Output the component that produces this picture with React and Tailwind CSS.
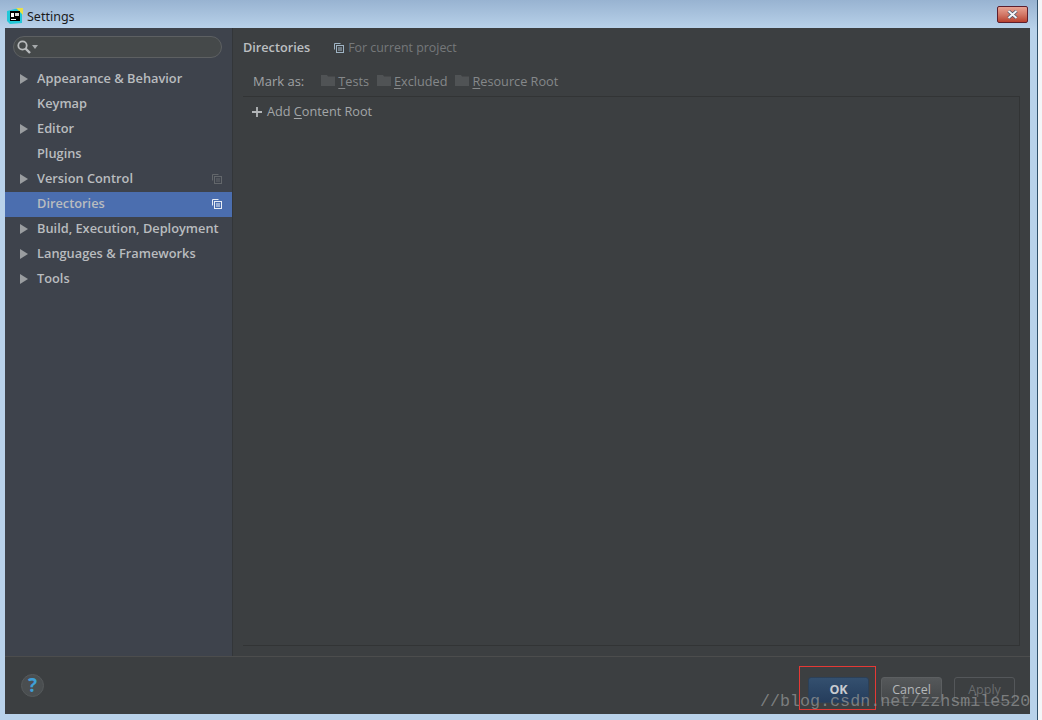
import React from "react";

const font = { fontFamily: '"Open Sans", "Noto Sans", sans-serif' };

const navItems = [
  { label: "Appearance & Behavior", arrow: true },
  { label: "Keymap" },
  { label: "Editor", arrow: true },
  { label: "Plugins" },
  { label: "Version Control", arrow: true, copy: true },
  { label: "Directories", active: true, copy: true },
  { label: "Build, Execution, Deployment", arrow: true },
  { label: "Languages & Frameworks", arrow: true },
  { label: "Tools", arrow: true },
];

const CopyIcon = ({ color = "#6b6f73" }) => (
  <svg width="10" height="10" viewBox="0 0 10 10" fill="none" stroke={color} strokeWidth="1">
    <path d="M0.5 6.5V0.5H6.5" />
    <rect x="2.5" y="2.5" width="7" height="7" />
    <path d="M4 5H8M4 7H8" />
  </svg>
);

const Folder = () => (
  <svg width="14" height="11" viewBox="0 0 14 11" className="shrink-0 mt-[-2px]">
    <path d="M0 0H6L7 1.5H14V11H0Z" fill="#505355" />
  </svg>
);

const MarkItem = ({ first, rest, className }) => (
  <span className={"flex items-center gap-[3px] " + className}>
    <Folder />
    <span className="text-[#85888a]">
      <span className="underline underline-offset-2">{first}</span>
      {rest}
    </span>
  </span>
);

const App = () => {
  return (
    <div
      className="relative w-[1042px] h-[720px] flex flex-col overflow-hidden bg-gradient-to-b from-[#98b3d1] via-[#b9d2ea] via-[4%] to-[#b9d2ea] text-[12.7px]"
      style={font}
    >
      {/* title bar */}
      <div className="h-[28px] shrink-0 flex items-center pl-[7px] pr-[14px] pt-[3px]">
        <svg width="16" height="16" viewBox="0 0 16 16" className="shrink-0">
          <path d="M0 3L12 0L15 2V15L3 16L0 13Z" fill="#21c8d8" />
          <path d="M9 0H16V7Z" fill="#e8e04a" />
          <rect x="3" y="3" width="10" height="10" fill="#000000" />
          <rect x="4" y="11" width="5" height="1" fill="#ffffff" />
          <rect x="4" y="5" width="3" height="4" fill="#ffffff" />
          <rect x="8" y="5" width="4" height="3" fill="#d8d8d8" />
        </svg>
        <span className="ml-[4px] mt-[4px] text-[12.5px] text-[#1a1a1a]" style={{ fontFamily: '"Noto Sans", sans-serif' }}>
          Settings
        </span>
        <div className="ml-auto mt-[-3px] w-[31px] h-[17px] rounded-[2px] border border-[#5c1f2e] bg-gradient-to-b from-[#e8a393] via-[#d27867] to-[#b8412f] flex items-center justify-center">
          <svg width="11" height="9" viewBox="0 0 11 9">
            <path d="M1.5 1L9.5 8M9.5 1L1.5 8" stroke="#4a5268" strokeWidth="3.4" />
            <path d="M1.5 1L9.5 8M9.5 1L1.5 8" stroke="#f3f5f8" strokeWidth="2" />
          </svg>
        </div>
      </div>

      {/* dialog */}
      <div className="ml-[5px] w-[1025px] h-[686px] flex flex-col bg-[#3c3f41]">
        <div className="flex-1 flex min-h-0">
          {/* sidebar */}
          <aside className="w-[228px] shrink-0 bg-[#3e434c] border-r border-[#333639] flex flex-col">
            <div className="mt-[8px] ml-[8px] w-[209px] h-[22px] rounded-full border border-[#5d6062] bg-[#45494a] flex items-center pl-[3px] gap-[1px]">
              <svg width="14" height="14" viewBox="0 0 14 14" fill="none" stroke="#b9bcbe" strokeWidth="1.8">
                <circle cx="5.5" cy="5.5" r="4.2" />
                <path d="M8.5 8.5L13 13" strokeWidth="2.4" />
              </svg>
              <svg width="6" height="4" viewBox="0 0 6 4">
                <path d="M0 0H6L3 4Z" fill="#a5a8aa" />
              </svg>
            </div>
            <nav className="mt-[9px] flex flex-col">
              {navItems.map((item) => (
                <div
                  key={item.label}
                  className={
                    "h-[25px] flex items-center pb-[2px] font-semibold text-[12.8px] text-[#b9bcbf] " +
                    (item.active ? "bg-[#4b6eaf]" : "")
                  }
                >
                  <span className="w-[32px] pl-[15px] shrink-0 flex">
                    {item.arrow && (
                      <svg width="8" height="10" viewBox="0 0 8 10">
                        <path d="M0 0L8 5L0 10Z" fill="#9a9da0" />
                      </svg>
                    )}
                  </span>
                  <span className="whitespace-nowrap">{item.label}</span>
                  {item.copy && (
                    <span className="ml-auto mr-[10px] flex">
                      <CopyIcon color={item.active ? "#e8edf5" : "#63676b"} />
                    </span>
                  )}
                </div>
              ))}
            </nav>
          </aside>

          {/* content */}
          <main className="flex-1 min-w-0 flex flex-col pl-[10px] pr-[10px] pb-[10px]">
            <div className="h-[40px] flex items-center shrink-0">
              <span className="font-semibold text-[#bcbfc1]">Directories</span>
              <span className="ml-[24px] flex items-center gap-[4px] text-[#75787a] text-[12.4px]">
                <CopyIcon color="#9fb4c4" />
                For current project
              </span>
            </div>
            <div className="h-[28px] flex items-center shrink-0 pl-[10px] text-[#a0a3a5]">
              <span className="mr-[17px] text-[13px]">Mark as:</span>
              <MarkItem first="T" rest="ests" className="mr-[8px]" />
              <MarkItem first="E" rest="xcluded" className="mr-[8px]" />
              <MarkItem first="R" rest="esource Root" />
            </div>
            <div className="flex-1 border-t border-b border-r border-[#323435]">
              <div className="h-[30px] flex items-center pl-[9px] text-[#a3a6a8]">
                <svg width="10" height="10" viewBox="0 0 10 10" className="mr-[5px]">
                  <path d="M5 0V10M0 5H10" stroke="#b3b6b8" strokeWidth="1.8" />
                </svg>
                <span>
                  Add <span className="underline underline-offset-2">C</span>ontent Root
                </span>
              </div>
            </div>
          </main>
        </div>

        {/* footer */}
        <footer className="h-[58px] shrink-0 border-t border-[#4c4d4d] flex items-start pl-[16px] pr-[15px]">
          <div className="mt-[17px] w-[23px] h-[23px] rounded-full bg-[#4a4e50] border border-[#55595b] flex items-center justify-center text-[#3f9fd6] font-bold text-[19px] leading-none">
            ?
          </div>
          <div className="ml-auto mt-[20px] flex gap-[12px] text-[12.5px]">
            <button className="relative w-[61px] h-[26px] rounded-[3px] border border-[#2c4057] bg-gradient-to-b from-[#34506f] to-[#253d5c] font-bold text-[#c8ccd0]">
              OK
              {/* highlight box drawn over the screenshot */}
              <span className="absolute left-[-10px] top-[-12px] w-[77px] h-[44px] border border-[#e53935]" />
            </button>
            <button className="w-[61px] h-[26px] rounded-[3px] border border-[#5c5f61] bg-gradient-to-b from-[#55585a] to-[#434648] text-[#b4b7b9]">
              Cancel
            </button>
            <button className="w-[61px] h-[26px] rounded-[3px] border border-[#54575a] text-[#6a6d6f]">
              Apply
            </button>
          </div>
        </footer>
      </div>

      {/* window edge */}
      <div className="absolute right-0 top-0 bottom-0 w-[5px] bg-[#f4f6f8] border-l border-[#30506a]" />

      {/* watermark */}
      <div
        className="absolute left-[760px] top-[690px] text-[16.7px] leading-[24px] whitespace-nowrap text-[#8d8f90]/80"
        style={{ fontFamily: '"Liberation Mono", monospace' }}
      >
        //blog.csdn.net/zzhsmile520
      </div>
    </div>
  );
};

export default App;
